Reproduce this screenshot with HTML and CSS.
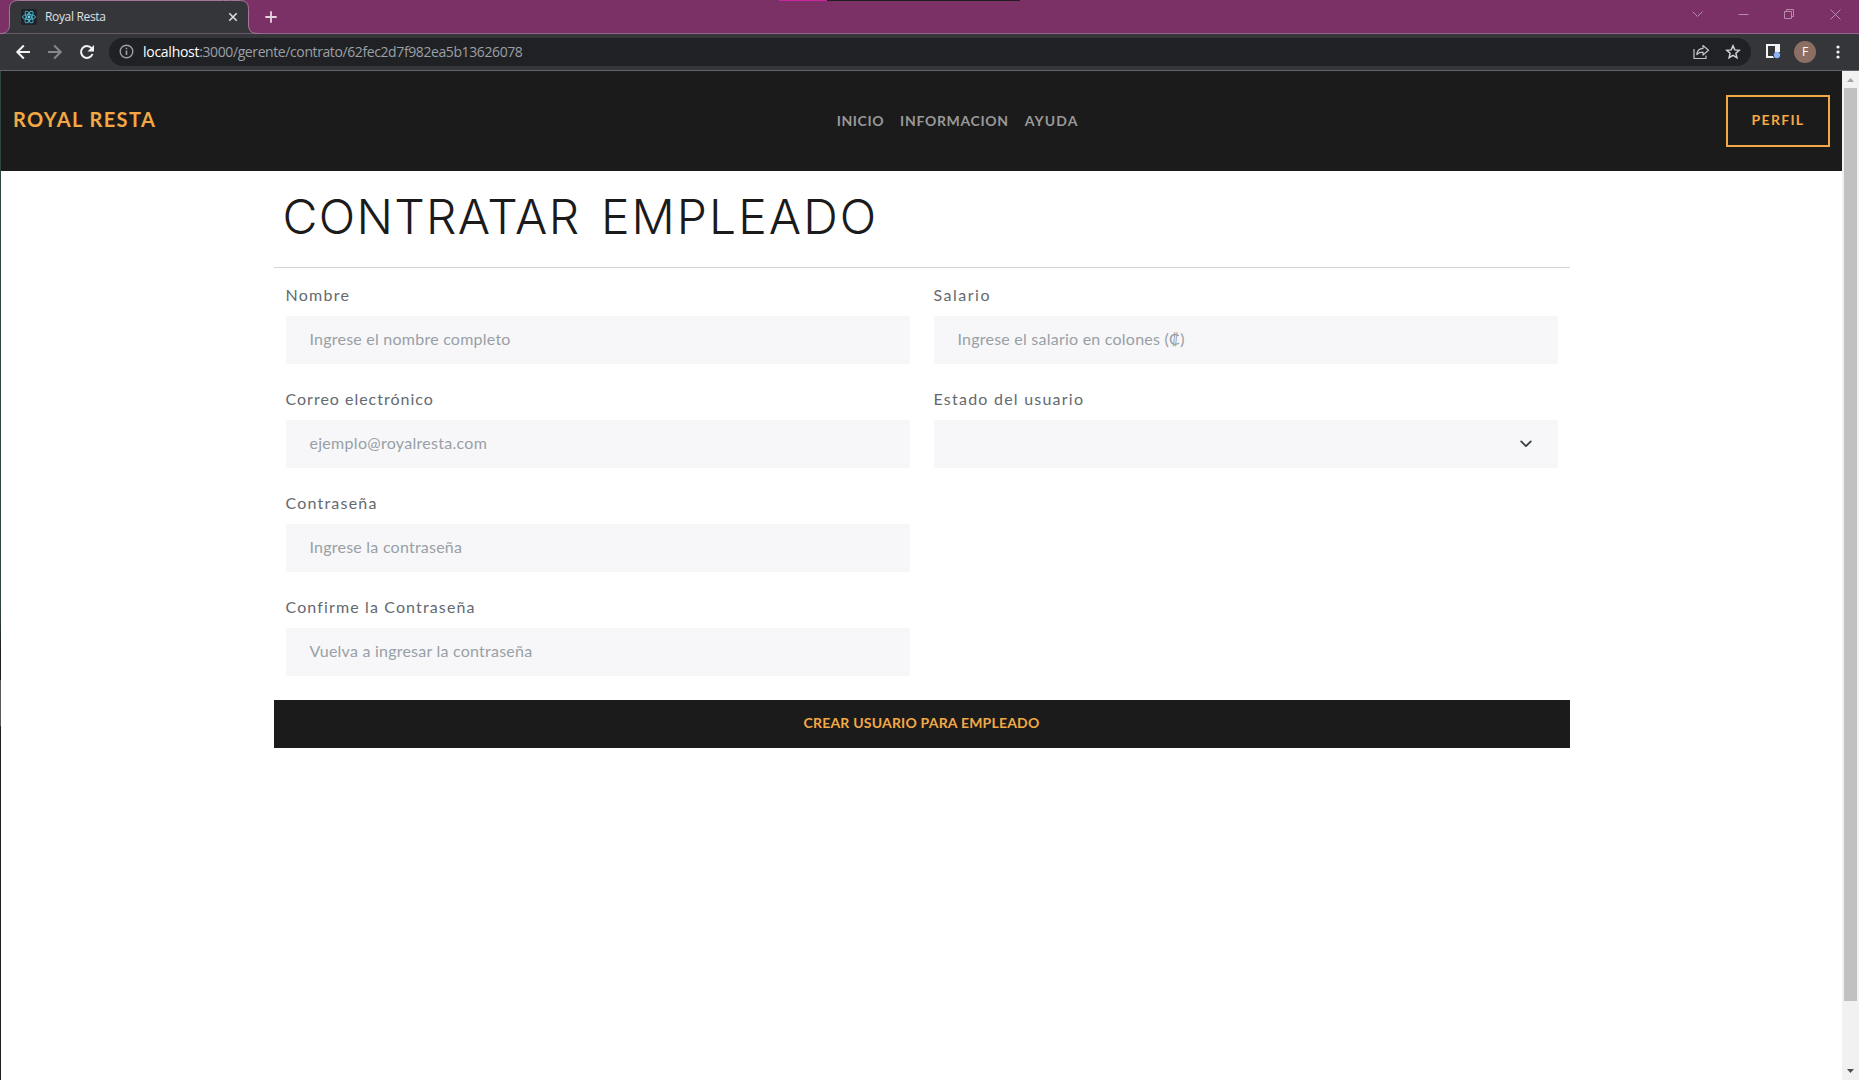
FILE: index.html
```html
<!DOCTYPE html>
<html lang="es">
<head>
<meta charset="utf-8">
<title>Royal Resta</title>
<link rel="stylesheet" href="styles.css">
</head>
<body>
<div class="window">
  <div class="desktop-strip"><i class="strip-pink"></i><i class="strip-dark"></i></div>
  <div class="tabstrip">
    <svg class="tab-shape" width="260" height="34" viewBox="0 0 260 34"><path class="tab-fill" d="M0 34V33.500H1C6.500 33.500 9.500 30 9.500 25V8.500Q9.500 .5 17.500 .5H223.500Q231.500 .5 231.500 .5H240.500Q248.500 .5 248.500 8.500V25Q248.500 33.500 257 33.500H260V34Z"/></svg>
    <div class="tab">
      <svg class="favicon" width="16" height="16" viewBox="0 0 16 16"><rect width="16" height="16" rx="2" fill="#20232a"/><g fill="none" stroke="#4fb9d0" stroke-width=".9"><ellipse cx="8" cy="8" rx="6.500" ry="2.500"/><ellipse cx="8" cy="8" rx="6.500" ry="2.500" transform="rotate(60 8 8)"/><ellipse cx="8" cy="8" rx="6.500" ry="2.500" transform="rotate(120 8 8)"/></g><circle cx="8" cy="8" r="1.400" fill="#61dafb"/></svg>
      <span class="tab-title">Royal Resta</span>
      <svg class="tab-close" width="10" height="10" viewBox="0 0 10 10"><path d="M1.300 1.300l7.400 7.400M8.700 1.300l-7.400 7.400" stroke="#dadce0" stroke-width="1.600"/></svg>
    </div>
    <svg class="new-tab" width="12" height="12" viewBox="0 0 12 12"><path d="M6 .3v11.400M.3 6h11.400" stroke="#e6d6e1" stroke-width="1.800"/></svg>
    <svg class="win-controls" width="150" height="12" viewBox="0 0 150 12" fill="none" stroke="#b78aa9"><path d="M.5 3.500l5 5 5-5M46.500 6.500h10M92.500 3.500h7v7h-7zM94.500 3.500v-2h7v7h-2M138.500 1.500l10 10M148.500 1.500l-10 10"/></svg>
  </div>
  <div class="toolbar">
    <svg class="nav-icons" width="80" height="16" viewBox="0 0 80 16" fill="none" stroke="#f1f3f4" stroke-width="2"><path d="M15 8H2.500M8.800 1.500L2.300 8l6.500 6.500"/><path stroke="#85878a" d="M33 8h12.500M39.200 1.500L45.700 8l-6.500 6.500"/><path d="M76.500 4.200A5.900 5.900 0 1 0 77.500 10"/><path fill="#f1f3f4" stroke="none" d="M79 1v6.500H72.500z"/></svg>
    <div class="omnibox">
      <svg width="15" height="15" viewBox="0 0 15 15" fill="none" stroke="#9aa0a6" stroke-width="1.400"><circle cx="7.500" cy="7.500" r="6.300"/><path stroke-width="1.600" d="M7.500 6.600v4.500M7.500 3.800v1.500"/></svg>
      <span class="host">localhost</span><span class="path">:3000/gerente/contrato/62fec2d7f982ea5b13626078</span>
      <svg class="share" width="17" height="16" viewBox="0 0 17 16" fill="none" stroke="#c3c5c8" stroke-width="1.200"><path d="M1 5v9.500h12V11.500"/><path stroke-linejoin="round" d="M3.800 10.500C4.300 6.500 6.500 4.600 10 4.400V1.500l5.500 4.800-5.500 4.700V8.200C7.500 8.200 5.500 8.800 3.800 10.500z"/></svg>
      <svg class="star" width="16" height="16" viewBox="0 0 16 16" fill="none" stroke="#d0d2d5" stroke-width="1.500"><path d="M8 1.800l1.800 4.100 4.400.4-3.300 3 1 4.300L8 11.300l-3.900 2.300 1-4.300-3.300-3 4.400-.4z"/></svg>
    </div>
    <svg class="panel-icon" width="15" height="15" viewBox="0 0 15 15"><path fill="#f1f3f4" fill-rule="evenodd" d="M0 0h14v14H0zM2 2v10h7V2z"/><circle cx="11" cy="11" r="4.200" fill="#35363a"/><path fill="#f1f3f4" d="M9 0h5v8H9z"/><circle cx="11" cy="11" r="3.200" fill="#8ab4f8"/></svg>
    <span class="avatar">F</span>
    <svg class="menu-icon" width="4" height="14" viewBox="0 0 4 14" fill="#f1f3f4"><circle cx="2" cy="2" r="1.600"/><circle cx="2" cy="7" r="1.600"/><circle cx="2" cy="12" r="1.600"/></svg>
  </div>
  <div class="viewport">
    <div class="edge"></div>
    <div class="page">
      <header class="navbar">
        <a class="brand">ROYAL RESTA</a>
        <nav class="links"><a class="link-inicio">INICIO</a><a class="link-info">INFORMACION</a><a class="link-ayuda">AYUDA</a></nav>
        <a class="profile">PERFIL</a>
      </header>
      <main class="container">
        <h1><span class="verb">CONTRATAR</span> EMPLEADO</h1>
        <div class="form">
          <div class="column">
            <div class="field"><label class="l-nombre">Nombre</label><div class="input">Ingrese el nombre completo</div></div>
            <div class="field"><label class="l-correo">Correo electrónico</label><div class="input mail">ejemplo@royalresta.com</div></div>
            <div class="field"><label class="l-clave">Contraseña</label><div class="input">Ingrese la contraseña</div></div>
            <div class="field"><label class="l-confirme">Confirme la Contraseña</label><div class="input">Vuelva a ingresar la contraseña</div></div>
          </div>
          <div class="column">
            <div class="field"><label class="l-salario">Salario</label><div class="input">Ingrese el salario en colones (₡)</div></div>
            <div class="field"><label class="l-estado">Estado del usuario</label><div class="input select"><svg width="12" height="8" viewBox="0 0 12 8"><path d="M1.200 1.400L6 6.200l4.800-4.800" fill="none" stroke="#343a40" stroke-width="1.700" stroke-linecap="round" stroke-linejoin="round"/></svg></div></div>
          </div>
        </div>
        <div class="submit">CREAR USUARIO PARA EMPLEADO</div>
      </main>
    </div>
    <div class="scrollbar">
      <svg width="17" height="17" viewBox="0 0 17 17"><path fill="#a3a3a3" d="M5 11h7L8.500 7z"/></svg>
      <div class="thumb"></div>
      <svg class="down" width="17" height="17" viewBox="0 0 17 17"><path fill="#505050" d="M5 6h7l-3.500 4z"/></svg>
    </div>
  </div>
</div>
</body>
</html>
```
FILE: styles.css
```css
* { box-sizing: border-box; }
body { margin: 0; background: #fff; font-family: Lato, "Liberation Sans", sans-serif; overflow: hidden; }
svg { display: block; flex: none; }
.window { height: 1080px; display: flex; flex-direction: column; position: relative; }
.desktop-strip { position: absolute; top: 0; left: 779px; height: 1px; display: flex; z-index: 2; }
.strip-pink { width: 48px; background: #c9279e; }
.strip-dark { width: 193px; background: #1f1f1f; }

.tabstrip { height: 34px; background: #7b3165; border-bottom: 1px solid #95678a; display: flex; position: relative; flex: none; }
.tab-shape { position: absolute; left: 0; top: 0; }
.tab-fill { fill: #35363a; stroke: #a5769a; stroke-width: 1; }
.tab { position: relative; width: 232px; margin-left: 9px; padding: 2px 0 0 12px; height: 32px; display: flex; align-items: center; }
.favicon { margin-right: 8px; }
.tab-title { font: 12px/16px "Open Sans", sans-serif; letter-spacing: -.34px; color: #dfe1e5; }
.tab-close { margin-left: auto; margin-right: 3px; }
.new-tab { position: relative; margin: 11px 0 0 24px; }
.win-controls { margin: 8px 17px 0 auto; }

.toolbar { height: 37px; background: #35363a; border-bottom: 1px solid #626367; display: flex; align-items: center; padding: 0 19px 1px 15px; flex: none; }
.omnibox { width: 1642px; height: 28px; margin-left: 14px; border-radius: 14px; background: #202124; display: flex; align-items: center; padding: 0 10px; font: 14px/20px "Open Sans", sans-serif; }
.host { margin-left: 9px; color: #fff; letter-spacing: -.27px; }
.path { color: #9aa0a6; letter-spacing: -.4px; }
.share { margin-left: auto; margin-right: 15px; }
.panel-icon { margin-left: 15px; }
.avatar { width: 22px; height: 22px; margin-left: 13px; border-radius: 50%; background: #8d6e63; color: #fff; font: 12px/22px "Open Sans", sans-serif; text-align: center; }
.menu-icon { margin-left: auto; }

.viewport { flex: 1; display: flex; min-height: 0; }
.edge { width: 1px; background: linear-gradient(#2f4644 0, #2f4644 540px, #1f1f20 580px, #1f1f20 609px, #5a5a5a 609px, #5a5a5a 655px, #1f1f20 655px); }
.page { flex: 1; background: #fff; }
.navbar { height: 100px; background: #1b1b1b; display: flex; align-items: center; justify-content: space-between; padding: 0 12px; font-weight: 700; }
.brand { color: #f2a945; font-size: 20px; line-height: 24px; letter-spacing: 1.400px; padding-bottom: 4px; }
.links { display: flex; gap: 16px; margin-left: 33px; font-size: 14px; line-height: 20px; color: #999; }
.link-inicio { letter-spacing: .6px; }
.link-info { letter-spacing: .68px; }
.link-ayuda { letter-spacing: 1.100px; }
.profile { width: 104px; height: 52px; border: 2px solid #f2a945; color: #f2a945; font-size: 14px; line-height: 46px; letter-spacing: 1.300px; text-align: center; }

.container { width: 1296px; margin: 0 auto; }
h1 { margin: 0 0 15px; height: 97px; padding: 17px 0 0 9px; border-bottom: 1px solid #d3d3d3; font: 300 48px/58px Inter, sans-serif; letter-spacing: 2.050px; word-spacing: 5px; color: #1b1b1b; }
.verb { letter-spacing: 1.300px; }
.form { display: grid; grid-template-columns: 1fr 1fr; gap: 24px; padding: 0 12px; }
.column { display: flex; flex-direction: column; gap: 23px; }
.field { height: 81px; }
label { display: block; height: 24px; margin-bottom: 9px; font-size: 16px; line-height: 24px; color: #64696f; }
.l-nombre { letter-spacing: 1.250px; }
.l-correo { letter-spacing: .99px; }
.l-clave { letter-spacing: 1.200px; }
.l-confirme { letter-spacing: 1.130px; }
.l-salario { letter-spacing: 1.500px; }
.l-estado { letter-spacing: 1.230px; }
.input { height: 48px; padding: 0 24px; background: #f7f7f9; font-size: 16px; line-height: 46px; letter-spacing: .23px; color: #98a0a6; white-space: nowrap; }
.mail { letter-spacing: .29px; }
.select { display: flex; align-items: center; justify-content: flex-end; padding-right: 26px; }
.submit { height: 48px; margin-top: 24px; background: #1b1b1b; color: #f2a945; font-size: 14px; font-weight: 700; line-height: 46px; letter-spacing: .2px; text-align: center; }

.scrollbar { width: 17px; background: #f1f1f1; display: flex; flex-direction: column; }
.thumb { height: 913px; margin: 0 2px; background: #c1c1c1; }
.down { margin-top: auto; }
```
